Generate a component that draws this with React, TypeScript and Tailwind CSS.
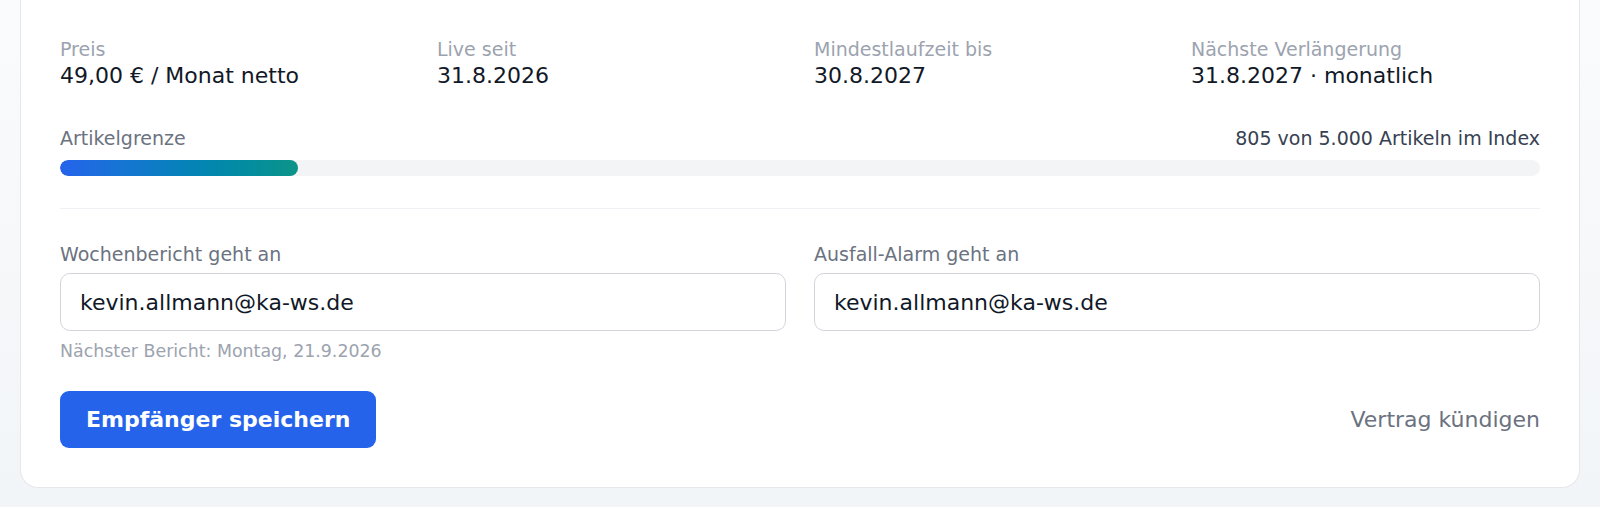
import React from "react";

const stats = [
  { label: "Preis", value: "49,00 € / Monat netto" },
  { label: "Live seit", value: "31.8.2026" },
  { label: "Mindestlaufzeit bis", value: "30.8.2027" },
  { label: "Nächste Verlängerung", value: "31.8.2027 · monatlich" },
];

export default function App() {
  const used = 805;
  const max = 5000;
  const pct = (used / max) * 100;
  return (
    <div
      className="min-h-[507px] bg-gradient-to-b from-[#fafbfc] to-[#f2f5f8] px-[20px] pb-[20px]"
      style={{ fontFamily: '"DejaVu Sans", "Noto Sans", sans-serif' }}
    >
      <div className="rounded-b-[18px] border-x border-b border-[#e5e7eb] bg-white px-[39px] pt-[35px] pb-[39px]">
        <div className="grid grid-cols-4 gap-x-[28px]">
          {stats.map((s) => (
            <div key={s.label}>
              <div className="text-[19px] leading-[28px] text-[#9ca3af]">{s.label}</div>
              <div className="text-[22px] leading-[26px] text-[#111827]">{s.value}</div>
            </div>
          ))}
        </div>

        <div className="mt-[35px] flex items-center justify-between text-[19px] leading-[28px]">
          <span className="text-[#6b7280]">Artikelgrenze</span>
          <span className="text-[#374151]">805 von 5.000 Artikeln im Index</span>
        </div>
        <div className="mt-[8px] h-[16px] w-full overflow-hidden rounded-full bg-[#f3f4f6]">
          <div
            className="h-full rounded-full bg-gradient-to-r from-[#2563eb] to-[#0d9488]"
            style={{ width: `${pct}%` }}
          />
        </div>

        <div className="mt-[32px] h-px bg-[#eef0f3]" />

        <div className="mt-[31px] grid grid-cols-2 gap-x-[28px]">
          <div>
            <div className="text-[19px] leading-[28px] text-[#6b7280]">Wochenbericht geht an</div>
            <input
              defaultValue="kevin.allmann@ka-ws.de"
              className="mt-[5px] block h-[58px] w-full rounded-[10px] border border-[#d1d5db] bg-white px-[19px] text-[22px] text-[#111827] outline-none"
            />
            <div className="mt-[8px] text-[17.4px] leading-[24px] text-[#9ca3af]">
              Nächster Bericht: Montag, 21.9.2026
            </div>
          </div>
          <div>
            <div className="text-[19px] leading-[28px] text-[#6b7280]">Ausfall-Alarm geht an</div>
            <input
              defaultValue="kevin.allmann@ka-ws.de"
              className="mt-[5px] block h-[58px] w-full rounded-[10px] border border-[#d1d5db] bg-white px-[19px] text-[22px] text-[#111827] outline-none"
            />
          </div>
        </div>

        <div className="mt-[28px] flex items-center justify-between">
          <button className="h-[57px] rounded-[9px] bg-[#2563eb] px-[26px] text-[22px] font-bold text-white">
            Empfänger speichern
          </button>
          <button className="text-[22px] text-[#6b7280]">Vertrag kündigen</button>
        </div>
      </div>
    </div>
  );
}
